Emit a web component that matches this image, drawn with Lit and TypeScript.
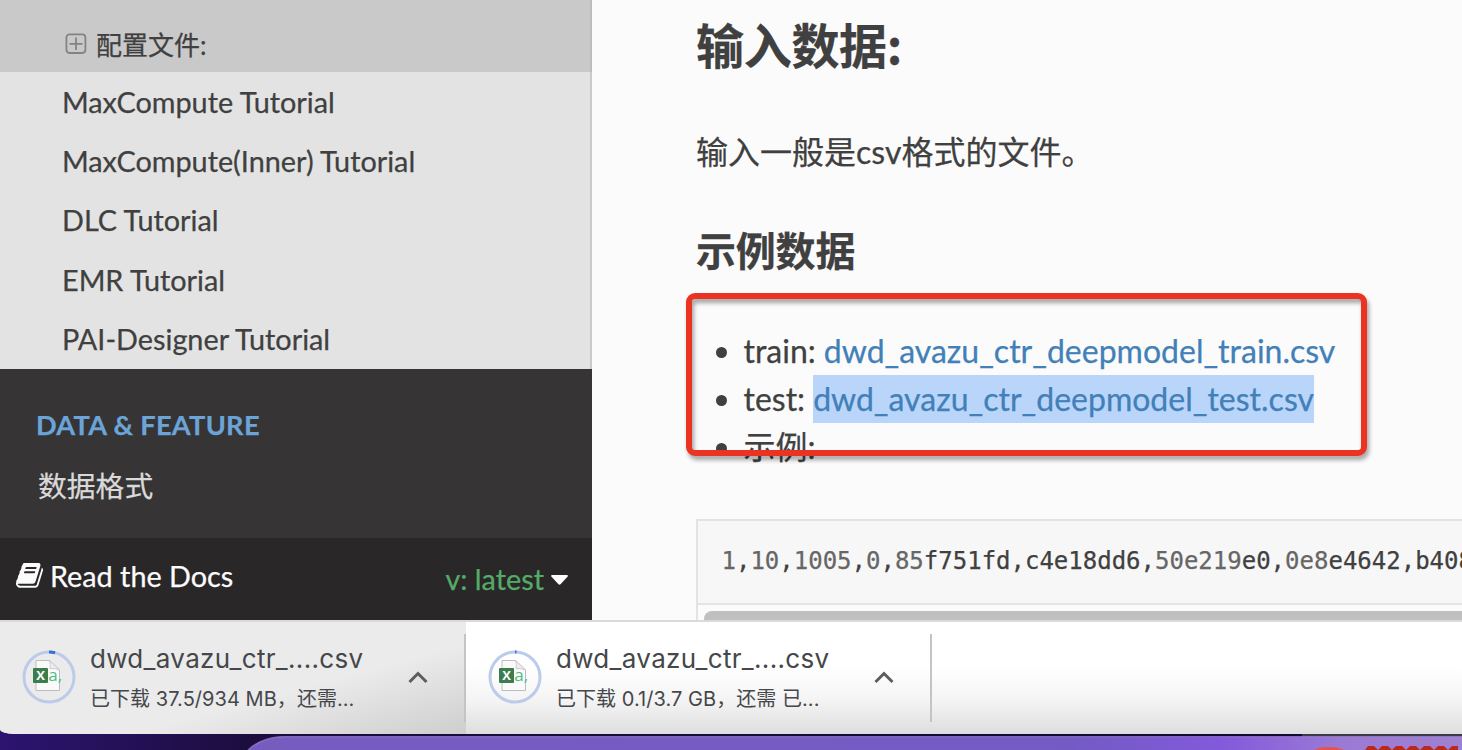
import { LitElement, html, css, svg } from 'lit'
import { customElement, property } from 'lit/decorators.js'

@customElement('docs-sidebar')
export class DocsSidebar extends LitElement {
  static styles = [
    css`
      :host {
        display: flex;
        flex-direction: column;
        flex: none;
        width: 592px;
        height: 620px;
        background: #363434;
        font-family: Lato, 'Noto Sans CJK SC', sans-serif;
        font-size: 28.8px;
        color: #404040;
        white-space: nowrap;
        -webkit-text-stroke: 0.25px currentColor;
      }
      .current {
        display: flex;
        align-items: center;
        box-sizing: border-box;
        height: 72px;
        padding: 15px 0 0 65px;
        gap: 9px;
        background: #c9c9c9;
        border-right: 2px solid #bcbcbc;
        font-size: 26px;
      }
      .current svg {
        width: 22px;
        height: 22px;
      }
      .links {
        box-sizing: border-box;
        height: 297px;
        padding-left: 62px;
        background: #e3e3e3;
        border-right: 2px solid #c9c9c9;
      }
      .link {
        height: 59.2px;
        line-height: 61px;
      }
      .caption {
        padding: 33px 0 0 36px;
        height: 44px;
        line-height: 46px;
        font-size: 27.2px;
        letter-spacing: 0.28px;
        font-weight: bold;
        color: #6ba4d8;
      }
      .entry {
        padding: 17px 0 0 38px;
        height: 75px;
        line-height: 46px;
        color: #d9d9d9;
      }
      .versions {
        display: flex;
        align-items: center;
        box-sizing: border-box;
        height: 82px;
        padding: 0 24px 6px 16px;
        background: #292727;
        color: #fcfcfc;
      }
      .book {
        width: 27px;
        height: 26px;
        margin-right: 7px;
      }
      .latest {
        margin-left: auto;
        padding-top: 6px;
        color: #55ab68;
      }
      .caret {
        width: 17px;
        height: 10px;
        margin: 8px 0 0 7px;
      }
    `
  ]
  tutorials = [
    'MaxCompute Tutorial',
    'MaxCompute(Inner) Tutorial',
    'DLC Tutorial',
    'EMR Tutorial',
    'PAI-Designer Tutorial'
  ]
  render() {
    return html`
      <div class="current">
        <svg viewBox="0 0 22 22" fill="none" stroke="#838383" stroke-width="1.8">
          <rect x="1.4" y="1.4" width="19" height="18.6" rx="3.2" />
          <path d="M4.5 10.8h13M11 4.5v12.5" />
        </svg>
        <span>配置文件:</span>
      </div>
      <div class="links">
        ${this.tutorials.map((t) => html`<div class="link">${t}</div>`)}
      </div>
      <div class="caption">DATA &amp; FEATURE</div>
      <div class="entry">数据格式</div>
      <div class="versions">
        <svg class="book" viewBox="0 0 1664 1536" fill="#fcfcfc">
          <path
            d="M1639 308q40 57 18 129l-275 906q-19 64-76.500 107.500t-122.500 43.500h-923q-77 0-148.500-53.500t-99.500-131.500q-24-67-2-127 0-4 3-27t4-37q1-8-3-21.500t-3-19.500q2-11 8-21t16.500-23.500 16.500-23.500q23-38 45-91.500t30-91.500q3-10 .5-30t-.5-28q3-11 17-28t17-23q21-36 42-92t25-90q1-9-2.500-32t.5-28q4-13 22-30.500t22-22.500q19-26 42.500-84.500t27.500-96.500q1-8-3-25.500t-2-26.500q2-8 9-18t18-23 17-21q8-12 16.500-30.500t15-35 16-36 19.500-32 26.500-23.500 36-11.500 47.500 5.500l-1 3q38-9 51-9h761q74 0 114 56t18 130l-274 906q-36 119-71.500 153.500t-128.500 34.500h-869q-27 0-38 15-11 16-1 43 24 70 144 70h923q29 0 56-15.500t35-41.500l300-987q7-22 5-57 38 15 59 43zm-1064 2q-4 13 2 22.500t20 9.500h608q13 0 25.500-9.500t16.500-22.500l21-64q4-13-2-22.500t-20-9.500h-608q-13 0-25.500 9.500t-16.500 22.500zm-83 256q-4 13 2 22.500t20 9.500h608q13 0 25.500-9.500t16.500-22.500l21-64q4-13-2-22.500t-20-9.500h-608q-13 0-25.500 9.500t-16.500 22.500z"
          />
        </svg>
        <span>Read the Docs</span>
        <span class="latest">v: latest</span>
        <svg class="caret" viewBox="0 0 17 10" fill="#fff">
          <path d="M1 0h15q1.400 .5 .5 1.700l-7 7.600q-1 .8-2 0l-7-7.600Q-.4 .5 1 0z" />
        </svg>
      </div>
    `
  }
}

@customElement('docs-content')
export class DocsContent extends LitElement {
  static styles = [
    css`
      :host {
        display: block;
        position: relative;
        flex: 1;
        box-sizing: border-box;
        min-width: 0;
        height: 620px;
        padding-left: 104px;
        overflow: hidden;
        background: #fbfbfb;
        color: #404040;
        font-family: Lato, 'Noto Sans CJK SC', sans-serif;
        font-size: 32px;
        line-height: 48px;
        white-space: nowrap;
        -webkit-text-stroke: 0.25px currentColor;
      }
      h2,
      h3,
      p,
      ul,
      pre {
        margin: 0;
      }
      h2 {
        height: 128px;
        line-height: 86px;
        font-family: 'Noto Sans CJK SC', sans-serif;
        font-size: 48px;
        letter-spacing: -0.3px;
      }
      p {
        height: 98px;
      }
      h3 {
        height: 101px;
        line-height: 46px;
        font-family: 'Noto Sans CJK SC', sans-serif;
        font-size: 40px;
        letter-spacing: -0.2px;
      }
      ul {
        padding: 0;
        list-style: none;
        height: 192px;
      }
      li {
        display: flex;
        align-items: center;
        height: 48px;
        padding-left: 20px;
      }
      .dot {
        width: 11px;
        height: 11px;
        margin: 2px 16.500px 0 0;
        border-radius: 50%;
        background: #404040;
      }
      .link {
        margin-left: 8px;
        color: #4180b8;
      }
      .selected {
        background: #bad5fa;
      }
      .code {
        height: 110px;
        border: 2px solid #e1e4e5;
        border-right: 0;
      }
      pre {
        height: 82px;
        padding-left: 23.500px;
        line-height: 80px;
        font-family: 'DejaVu Sans Mono', monospace;
        font-size: 24px;
        background: #f7f7f7;
        border-bottom: 2px solid #e4e4e4;
      }
      .num {
        color: #666;
      }
      .scroll {
        height: 16px;
        margin: 6px 0 0 6px;
        border-radius: 8px 0 0 8px;
        background: #c0c0c0;
      }
      .marker {
        position: absolute;
        left: 94px;
        top: 293px;
        box-sizing: border-box;
        width: 681px;
        height: 163px;
        border: 6px solid #eb3323;
        border-radius: 9px;
        filter: drop-shadow(2px 4px 2px rgba(0, 0, 0, 0.35));
      }
    `
  ]
  render() {
    return html`
      <h2>输入数据:</h2>
      <p>输入一般是csv格式的文件。</p>
      <h3>示例数据</h3>
      <ul>
        <li><i class="dot"></i>train:<span class="link">dwd_avazu_ctr_deepmodel_train.csv</span></li>
        <li><i class="dot"></i>test:<span class="link selected">dwd_avazu_ctr_deepmodel_test.csv</span></li>
        <li><i class="dot"></i>示例:</li>
      </ul>
      <div class="code">
        <pre><span class="num">1</span>,<span class="num">10</span>,<span class="num">1005</span>,<span class="num">0</span>,<span class="num">85</span>f751fd,c4e18dd6,<span class="num">50e219</span>e0,<span class="num">0e8</span>e4642,b408</pre>
        <div class="scroll"></div>
      </div>
      <div class="marker"></div>
    `
  }
}

@customElement('download-item')
export class DownloadItem extends LitElement {
  @property() name = ''
  @property() status = ''
  @property({ type: Number }) progress = 0

  static styles = [
    css`
      :host {
        display: flex;
        align-items: center;
        box-sizing: border-box;
        width: 466px;
        height: 112px;
        padding-left: 22px;
        font-family: Inter, 'Noto Sans CJK SC', sans-serif;
        color: #45474a;
        white-space: nowrap;
      }
      .file {
        width: 54px;
        height: 54px;
        margin: 0 14px 2px 0;
      }
      .letter {
        font: bold 13px 'Open Sans', sans-serif;
      }
      .csv {
        font: 17px 'Open Sans', sans-serif;
      }
      .text {
        width: 318px;
        padding-top: 5px;
      }
      .name {
        font-size: 26px;
        line-height: 36px;
        letter-spacing: 0.32px;
      }
      .status {
        font-size: 20px;
        line-height: 44px;
        letter-spacing: 0.05px;
      }
      .chevron {
        width: 20px;
        height: 14px;
        margin-bottom: 2px;
      }
      .rule {
        width: 2px;
        height: 88px;
        margin-left: auto;
        background: #c4c4c4;
      }
    `
  ]
  render() {
    return html`
      <svg class="file" viewBox="0 0 54 54">
        <g fill="none" stroke-width="3">
          <circle cx="27" cy="27" r="25" stroke="#bccbea" />
          <circle
            cx="27"
            cy="27"
            r="25"
            stroke="#3b6fd8"
            pathLength="100"
            stroke-dasharray="${this.progress} 100"
            transform="rotate(-90 27 27)"
          />
        </g>
        <path d="M14 10.500h13.500l10 9.500v20.500h-23.500z" fill="#fafafa" stroke="#bdbdbd" />
        <path d="M27.500 10.500q1.500 4 .5 8 5-.5 9.500 1.500z" fill="#eee" stroke="#c4c4c4" stroke-width=".8" />
        <rect x="11" y="18" width="15" height="15" rx="1" fill="#3b7d4c" />
        ${svg`<text class="letter" x="14.300" y="30.200" fill="#fff">X</text>
        <text class="csv" x="26.200" y="31" fill="#4dbd80">a,</text>`}
      </svg>
      <div class="text">
        <div class="name">${this.name}</div>
        <div class="status">${this.status}</div>
      </div>
      <svg class="chevron" viewBox="0 0 20 14" fill="none" stroke="#5b5d61" stroke-width="3">
        <path d="M1.500 12l8.500-8.500 8.500 8.500" />
      </svg>
      <div class="rule"></div>
    `
  }
}

@customElement('app-root')
export class AppRoot extends LitElement {
  static styles = [
    css`
      :host {
        display: block;
        width: 1462px;
        height: 750px;
        overflow: hidden;
        background: linear-gradient(90deg, #2c1470, #1c0d3e 250px, #130a35 1302px, #3d3b45 1302px);
      }
      .window {
        overflow: hidden;
        height: 734px;
        border-radius: 0 0 0 14px / 0 0 0 5px;
      }
      .page {
        display: flex;
      }
      .downloads {
        display: flex;
        height: 112px;
        border-top: 2px solid #dadadc;
        background: linear-gradient(#fff 40%, #f4f4f4 70%, #dedede);
      }
      .active {
        background: linear-gradient(165deg, #ebebeb 62%, #cecece);
      }
      .desktop {
        display: flex;
        height: 14px;
        padding: 2px 0 0 246px;
      }
      .dock {
        flex: 1;
        height: 14px;
      }
      .dock svg {
        display: block;
      }
    `
  ]
  render() {
    return html`
      <div class="window">
        <div class="page">
          <docs-sidebar></docs-sidebar>
          <docs-content></docs-content>
        </div>
        <div class="downloads">
          <download-item
            class="active"
            name="dwd_avazu_ctr_....csv"
            status="已下载 37.5/934 MB，还需..."
            progress="4"
          ></download-item>
          <download-item
            name="dwd_avazu_ctr_....csv"
            status="已下载 0.1/3.7 GB，还需 已..."
            progress="1"
          ></download-item>
        </div>
      </div>
      <div class="desktop">
        <div class="dock">
          <svg width="1216" height="14" viewBox="0 0 1216 14">
            <defs>
              <linearGradient id="dock">
                <stop offset="0" stop-color="#775cc0" />
                <stop offset=".68" stop-color="#745bc4" />
                <stop offset=".8" stop-color="#8259dc" />
                <stop offset=".9" stop-color="#9b7ad4" />
                <stop offset="1" stop-color="#a080d0" />
              </linearGradient>
            </defs>
            <path d="M2 14Q16 1 38 .5H1216V14z" fill="url(#dock)" />
            <path d="M2 14Q16 1 38 .5H1216" fill="none" stroke="#a48ad8" stroke-width="1.500" opacity=".6" />
            <ellipse cx="1083" cy="22" rx="22" ry="11" fill="#e25548" />
            <path
              d="M1119 14l3-4h6l4 4 4-4h6l4 4 4-4h6l4 4 4-4h6l4 4 4-4h6l4 4 4-4h6l4 4 4-4h6v4z"
              fill="#b8291f"
            />
          </svg>
        </div>
      </div>
    `
  }
}
